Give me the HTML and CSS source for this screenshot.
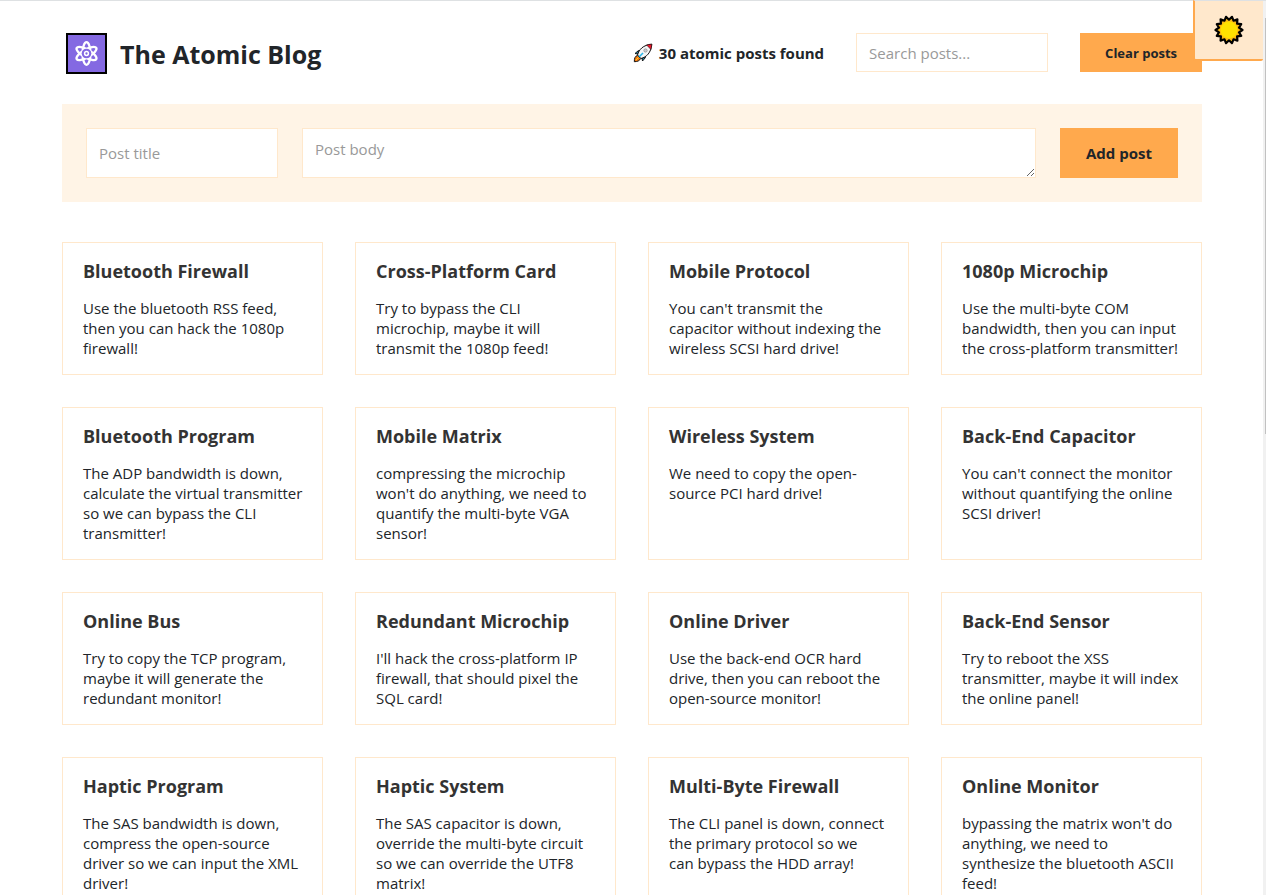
FILE: index.html
```html
<!DOCTYPE html>
<html lang="en">
<head>
<meta charset="utf-8">
<title>The Atomic Blog</title>
<link rel="stylesheet" href="styles.css">
</head>
<body>
<button class="theme-toggle" type="button" aria-label="Toggle dark mode">
<svg class="sun" viewBox="0 0 30 30" aria-hidden="true"><path d="M15 4.700L18 1.800l1.500 3.900 3.900-1.300-.3 4.200 4.100.5-2.200 3.600 3.500 2.300-3.500 2.300 2.200 3.600-4.100.5.300 4.200-3.900-1.300L18 28.200l-3-2.900-3 2.900-1.500-3.900-3.900 1.300.3-4.200-4.100-.5L5 17.300 1.500 15 5 12.700 2.800 9.100l4.100-.5-.3-4.200 3.900 1.300L12 1.800z" fill="#fcb912" stroke="#000" stroke-width="2.200" stroke-linejoin="round"/><circle cx="15" cy="15" r="8.500" fill="#ffe100"/></svg>
</button>
<div class="scrollbar" aria-hidden="true"><div class="thumb"></div></div>
<div class="page">
<header class="header">
<h1 class="brand"><svg class="logo" viewBox="0 0 41 41" aria-hidden="true"><rect x="1" y="1" width="39" height="39" fill="#8469e2" stroke="#000" stroke-width="2"/><g fill="none" stroke="#fff" stroke-width="2.300"><ellipse cx="20.500" cy="20.500" rx="4" ry="11.300"/><ellipse cx="20.500" cy="20.500" rx="4" ry="11.300" transform="rotate(60 20.500 20.500)"/><ellipse cx="20.500" cy="20.500" rx="4" ry="11.300" transform="rotate(120 20.500 20.500)"/></g><circle cx="20.500" cy="20.500" r="4.800" fill="#8469e2"/><circle cx="20.500" cy="20.500" r="1.900" fill="#8469e2" stroke="#fff" stroke-width="1.500"/></svg>The Atomic Blog</h1>
<div class="tools">
<p class="count"><svg class="rocket" viewBox="0 0 20 20" aria-hidden="true"><path d="M5.500 7.500L2 10.500l3 .5zM12.500 14.500L9.500 18l-.5-3z" fill="#26b5e8" stroke="#111" stroke-linejoin="round"/><path d="M4.500 12.500C2 13 1.300 15.500 1.300 18.700c3 0 5.500-.9 6.200-3.200z" fill="#f57c0f" stroke="#111"/><path d="M3 17l2.500-2.500" stroke="#ffd12a"/><path d="M4.500 12C6 6.500 10 2 18.800 1.200 18 10 13.500 14 8 15.500z" fill="#f4f5f6" stroke="#111" stroke-linejoin="round"/><path d="M13.500 1.900q2.500-.7 5.300-.7-.2 2.800-.9 5.300z" fill="#e8182c" stroke="#111" stroke-width=".5"/><circle cx="12.500" cy="7.500" r="1.700" fill="#c8ccd0" stroke="#777" stroke-width=".5"/><path d="M6 14l4-4" stroke="#26b5e8" stroke-width="1.600"/></svg>30 atomic posts found</p>
<input class="field search" type="text" placeholder="Search posts..." aria-label="Search posts">
<button class="button small" type="button">Clear posts</button>
</div>
</header>
<main>
<form class="post-form">
<input class="field" type="text" placeholder="Post title" aria-label="Post title">
<textarea class="field body" placeholder="Post body" aria-label="Post body"></textarea>
<button class="button large" type="button">Add post</button>
</form>
<ul class="posts">
<li class="post"><h3>Bluetooth Firewall</h3><p>Use the bluetooth RSS feed, then you can hack the 1080p firewall!</p></li>
<li class="post"><h3>Cross-Platform Card</h3><p>Try to bypass the CLI microchip, maybe it will transmit the 1080p feed!</p></li>
<li class="post"><h3>Mobile Protocol</h3><p>You can't transmit the capacitor without indexing the wireless SCSI hard drive!</p></li>
<li class="post"><h3>1080p Microchip</h3><p>Use the multi-byte COM bandwidth, then you can input the cross-platform transmitter!</p></li>
<li class="post"><h3>Bluetooth Program</h3><p>The ADP bandwidth is down, calculate the virtual transmitter so we can bypass the CLI transmitter!</p></li>
<li class="post"><h3>Mobile Matrix</h3><p>compressing the microchip won't do anything, we need to quantify the multi-byte VGA sensor!</p></li>
<li class="post"><h3>Wireless System</h3><p>We need to copy the open-source PCI hard drive!</p></li>
<li class="post"><h3>Back-End Capacitor</h3><p>You can't connect the monitor without quantifying the online SCSI driver!</p></li>
<li class="post"><h3>Online Bus</h3><p>Try to copy the TCP program, maybe it will generate the redundant monitor!</p></li>
<li class="post"><h3>Redundant Microchip</h3><p>I'll hack the cross-platform IP firewall, that should pixel the SQL card!</p></li>
<li class="post"><h3>Online Driver</h3><p>Use the back-end OCR hard drive, then you can reboot the open-source monitor!</p></li>
<li class="post"><h3>Back-End Sensor</h3><p>Try to reboot the XSS transmitter, maybe it will index the online panel!</p></li>
<li class="post"><h3>Haptic Program</h3><p>The SAS bandwidth is down, compress the open-source driver so we can input the XML driver!</p></li>
<li class="post"><h3>Haptic System</h3><p>The SAS capacitor is down, override the multi-byte circuit so we can override the UTF8 matrix!</p></li>
<li class="post"><h3>Multi-Byte Firewall</h3><p>The CLI panel is down, connect the primary protocol so we can&nbsp;bypass the HDD array!</p></li>
<li class="post"><h3>Online Monitor</h3><p>bypassing the matrix won't do anything, we need to synthesize the bluetooth ASCII feed!</p></li>
</ul>
</main>
</div>
</body>
</html>
```
FILE: styles.css
```css
* {
  box-sizing: border-box;
  margin: 0;
  padding: 0;
}

body {
  height: 100vh;
  overflow: hidden;
  border-top: 1px solid #dee1e3;
  background: #fff;
  color: #212529;
  font-family: "Segoe UI", "Open Sans", "Noto Sans", sans-serif;
  font-size: 15px;
  line-height: 20px;
}

.page {
  padding: 32px 64px 0 62px;
}

.header {
  display: flex;
  align-items: flex-start;
  justify-content: space-between;
  margin-bottom: 30px;
}

.brand {
  display: flex;
  align-items: center;
  gap: 13px;
  padding-left: 4px;
  font-size: 25px;
  line-height: 34px;
  white-space: nowrap;
}

.logo {
  width: 41px;
  height: 41px;
}

.tools {
  display: flex;
  align-items: center;
  gap: 32px;
}

.count {
  display: flex;
  align-items: center;
  gap: 6px;
  font-weight: 700;
  white-space: nowrap;
}

.rocket {
  width: 20px;
  height: 20px;
  fill: none;
}

.field {
  min-width: 0;
  width: 100%;
  padding: 8px 12px;
  border: 1px solid #ffe8cc;
  border-radius: 0;
  background: #fff;
  color: inherit;
  font: inherit;
}

.field::placeholder {
  color: #999;
}

.search {
  width: 192px;
  height: 39px;
}

.body {
  display: block;
  height: 50px;
}

.button {
  padding: 0 25px;
  border: 0;
  background: #ffa94d;
  color: inherit;
  font: inherit;
  font-weight: 700;
  white-space: nowrap;
}

.small {
  height: 39px;
  font-size: 13px;
}

.large {
  padding: 0 26px;
  font-size: 15px;
}

.post-form {
  display: grid;
  grid-template-columns: 192px 1fr auto;
  gap: 24px;
  padding: 24px;
  margin-bottom: 40px;
  background: #fff4e6;
}

.post-form .field {
  padding: 10px 12px;
}

.posts {
  display: grid;
  grid-template-columns: repeat(4, 1fr);
  gap: 32px;
  list-style: none;
}

.post {
  padding: 16px 18px 16px 20px;
  border: 1px solid #ffe8cc;
}

.post h3 {
  margin-bottom: 15px;
  color: #333;
  font-size: 18px;
  line-height: 24px;
}

.theme-toggle {
  position: absolute;
  z-index: 1;
  top: 0;
  right: 3px;
  display: grid;
  place-items: center;
  width: 70px;
  height: 61px;
  border: 2px solid #ffa94d;
  border-top: 1px solid #dee1e3;
  border-right: 0;
  border-radius: 0 0 2px 3px;
  background: #ffe8cc;
}

.sun {
  width: 30px;
  height: 30px;
}

.scrollbar {
  position: absolute;
  top: 1px;
  right: 0;
  bottom: 0;
  width: 3px;
  padding: 17px 0 0 2px;
  background: #f1f1f1;
}

.thumb {
  height: 416px;
  background: #c1c1c1;
}
```
